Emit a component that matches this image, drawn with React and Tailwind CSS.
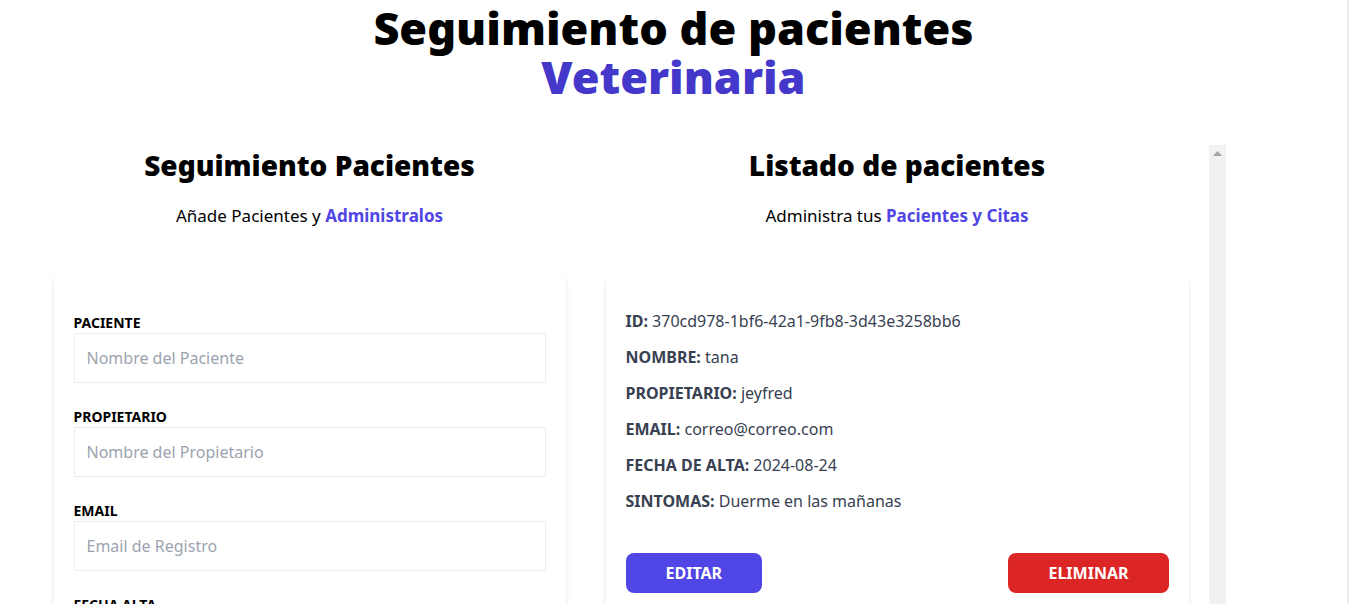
import React from "react";

const font = { fontFamily: '"Noto Sans", "Open Sans", sans-serif' };

function Field({ label, placeholder }) {
  return (
    <div className="mb-6">
      <label className="block h-5 text-sm leading-5 font-bold uppercase text-black">{label}</label>
      <input
        className="block w-full h-[50px] border border-[#ededed] px-3 text-base placeholder-[#9ca3af] outline-none"
        placeholder={placeholder}
      />
    </div>
  );
}

function Row({ k, v }) {
  return (
    <p className="mb-3 text-base leading-6 text-[#374151]">
      <span className="font-bold uppercase">{k}: </span>
      <span className="font-normal">{v}</span>
    </p>
  );
}

export default function App() {
  return (
    <div className="h-screen overflow-hidden bg-white border-r-2 border-[#ececec]" style={font}>
      <div className="mx-auto w-[1280px] pt-[3px]">
        <h1 className="mx-auto text-center text-[45px] leading-[49px] font-black text-black">
          Seguimiento de pacientes
          <br />
          <span className="text-[#4338ca]">Veterinaria</span>
        </h1>
        <div className="mt-[41px] flex">
          <div className="mx-5 w-[512px] shrink-0">
            <h2 className="pt-[5px] text-center text-[28px] leading-9 font-black text-black">Seguimiento Pacientes</h2>
            <p className="mt-[19px] text-center text-[17px] leading-7 text-black">
              Añade Pacientes y <span className="font-bold text-[#4f46e5]">Administralos</span>
            </p>
            <form className="mt-[41px] rounded-lg bg-white px-5 pt-[42px] pb-10 shadow-md">
              <Field label="Paciente" placeholder="Nombre del Paciente" />
              <Field label="Propietario" placeholder="Nombre del Propietario" />
              <Field label="Email" placeholder="Email de Registro" />
              <Field label="Fecha Alta" placeholder="" />
            </form>
          </div>
          <div className="mt-[3px] flex w-[640px] shrink-0 h-[700px]">
            <div className="flex-1">
              <h2 className="pt-[2px] text-center text-[28px] leading-9 font-black text-black">Listado de pacientes</h2>
              <p className="mt-[19px] text-center text-[17px] leading-7 text-black">
                Administra tus <span className="font-bold text-[#4f46e5]">Pacientes y Citas</span>
              </p>
              <div className="mx-5 mt-[41px] rounded-xl bg-white px-5 pt-[38px] pb-10 shadow-md">
                <Row k="ID" v="370cd978-1bf6-42a1-9fb8-3d43e3258bb6" />
                <Row k="Nombre" v="tana" />
                <Row k="Propietario" v="jeyfred" />
                <Row k="Email" v="correo@correo.com" />
                <Row k="Fecha de Alta" v="2024-08-24" />
                <Row k="Sintomas" v="Duerme en las mañanas" />
                <div className="mt-10 flex justify-between">
                  <button className="rounded-lg bg-[#4f46e5] px-10 py-2 text-base leading-6 font-bold uppercase text-white">Editar</button>
                  <button className="rounded-lg bg-[#dc2626] px-10 py-2 text-base leading-6 font-bold uppercase text-white">Eliminar</button>
                </div>
              </div>
            </div>
            <div className="w-[17px] shrink-0 bg-[#f1f1f1] flex justify-center pt-[6px]">
              <svg width="9" height="5" viewBox="0 0 9 5"><path d="M0 5 L4.5 0 L9 5 Z" fill="#a3a3a3" /></svg>
            </div>
          </div>
        </div>
      </div>
    </div>
  );
}
